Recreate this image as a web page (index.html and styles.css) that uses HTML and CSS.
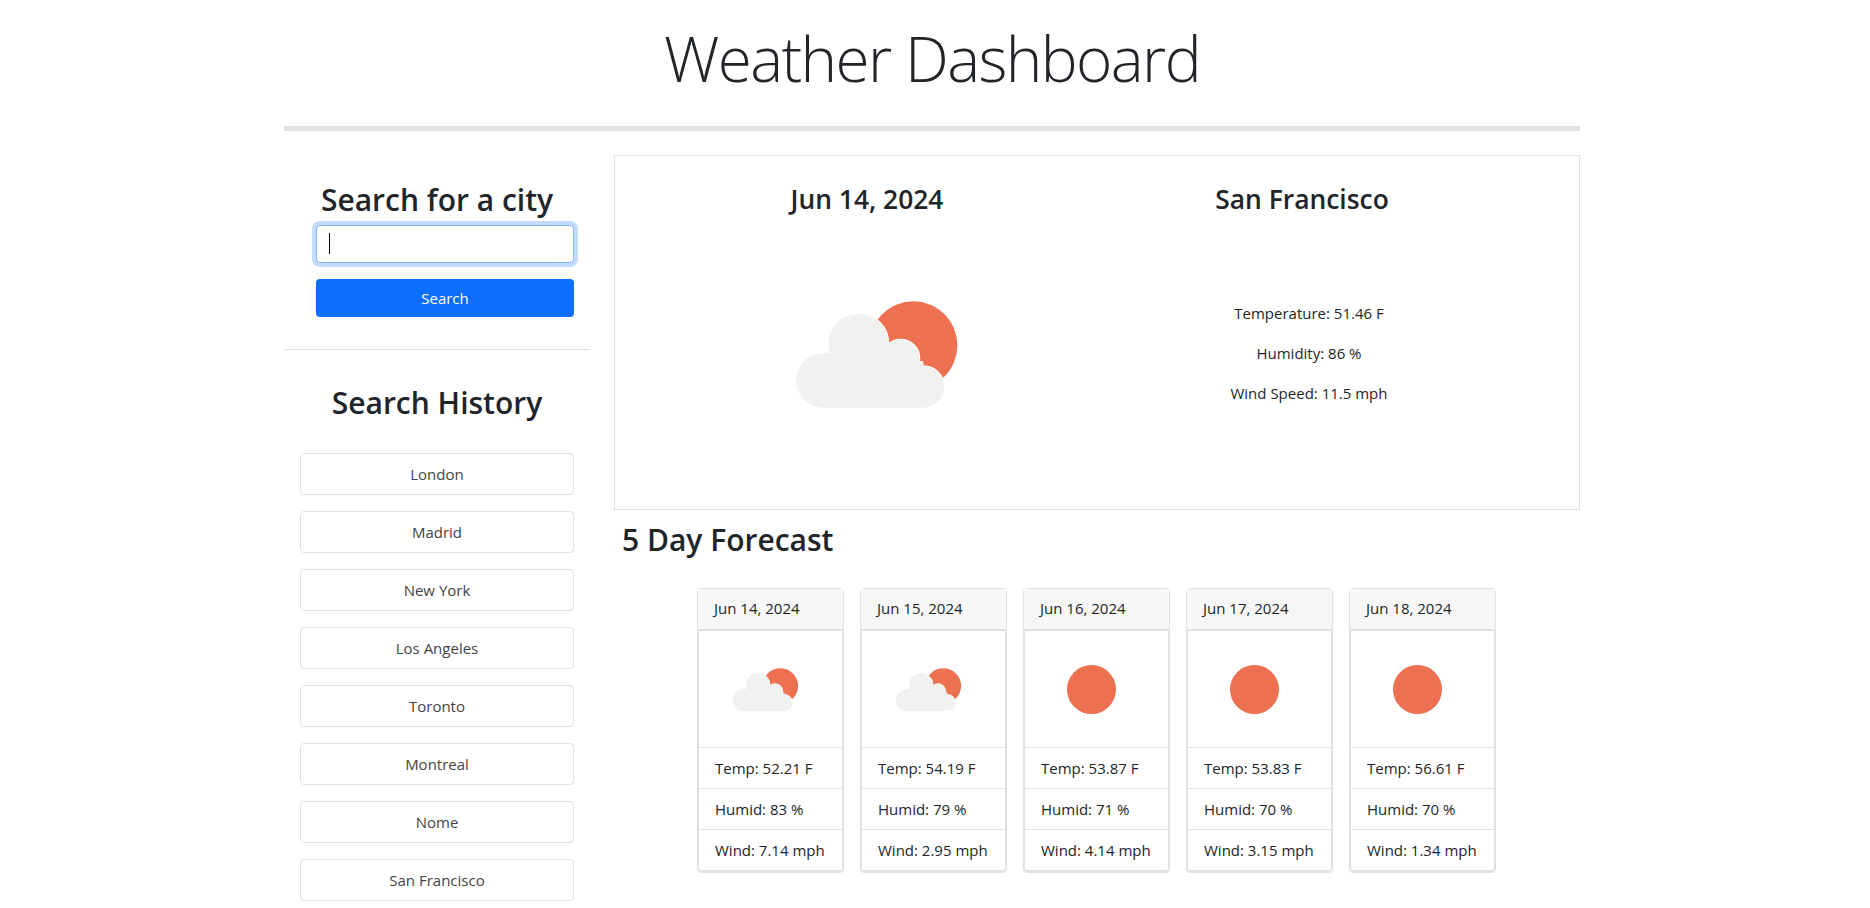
FILE: index.html
```html
<!DOCTYPE html>
<html lang="en">
<head>
  <meta charset="UTF-8" />
  <title>Weather Dashboard</title>
  <link rel="stylesheet" href="styles.css">
</head>
<body>
  <svg class="defs" aria-hidden="true">
    <symbol id="icon-clouds" viewBox="141 9 600 600">
      <circle cx="580" cy="283" r="132" fill="#ed7050" />
      <g fill="#fff" stroke="#fff" stroke-width="6">
        <circle cx="415" cy="278" r="90" />
        <circle cx="542" cy="322" r="56" />
        <circle cx="610" cy="408" r="62" />
      </g>
      <g fill="#f1f2f0">
        <circle cx="310" cy="388" r="82" />
        <circle cx="415" cy="278" r="90" />
        <circle cx="542" cy="322" r="56" />
        <circle cx="610" cy="408" r="62" />
        <rect x="310" y="330" width="300" height="140" />
      </g>
    </symbol>
    <symbol id="icon-sun" viewBox="0 0 81 81">
      <circle cx="44.5" cy="40.5" r="24.5" fill="#ed7050" />
    </symbol>
  </svg>

  <div class="container">
    <header class="page-title">
      <h1>Weather Dashboard</h1>
    </header>
    <hr class="title-rule">

    <div class="row">
      <aside class="sidebar">
        <form class="search-form">
          <h2>Search for a city</h2>
          <div class="input-wrap">
            <input type="text" class="city-input" aria-label="City">
            <span class="caret"></span>
          </div>
          <button type="button" class="btn-search">Search</button>
        </form>
        <hr class="side-rule">
        <h2 class="history-title">Search History</h2>
        <div class="history">
          <button type="button">London</button>
          <button type="button">Madrid</button>
          <button type="button">New York</button>
          <button type="button">Los Angeles</button>
          <button type="button">Toronto</button>
          <button type="button">Montreal</button>
          <button type="button">Nome</button>
          <button type="button">San Francisco</button>
        </div>
      </aside>

      <main class="content">
        <section class="current">
          <div class="current-left">
            <h3>Jun 14, 2024</h3>
            <svg class="current-icon"><use href="#icon-clouds" /></svg>
          </div>
          <div class="current-right">
            <h3>San Francisco</h3>
            <div class="current-stats">
              <p>Temperature: 51.46 F</p>
              <p>Humidity: 86 %</p>
              <p>Wind Speed: 11.5 mph</p>
            </div>
          </div>
        </section>

        <h2 class="forecast-title">5 Day Forecast</h2>
        <div class="forecast">
          <div class="day">
            <div class="day-date">Jun 14, 2024</div>
            <ul>
              <li class="day-icon"><svg><use href="#icon-clouds" /></svg></li>
              <li>Temp: 52.21 F</li>
              <li>Humid: 83 %</li>
              <li>Wind: 7.14 mph</li>
            </ul>
          </div>
          <div class="day">
            <div class="day-date">Jun 15, 2024</div>
            <ul>
              <li class="day-icon"><svg><use href="#icon-clouds" /></svg></li>
              <li>Temp: 54.19 F</li>
              <li>Humid: 79 %</li>
              <li>Wind: 2.95 mph</li>
            </ul>
          </div>
          <div class="day">
            <div class="day-date">Jun 16, 2024</div>
            <ul>
              <li class="day-icon"><svg><use href="#icon-sun" /></svg></li>
              <li>Temp: 53.87 F</li>
              <li>Humid: 71 %</li>
              <li>Wind: 4.14 mph</li>
            </ul>
          </div>
          <div class="day">
            <div class="day-date">Jun 17, 2024</div>
            <ul>
              <li class="day-icon"><svg><use href="#icon-sun" /></svg></li>
              <li>Temp: 53.83 F</li>
              <li>Humid: 70 %</li>
              <li>Wind: 3.15 mph</li>
            </ul>
          </div>
          <div class="day">
            <div class="day-date">Jun 18, 2024</div>
            <ul>
              <li class="day-icon"><svg><use href="#icon-sun" /></svg></li>
              <li>Temp: 56.61 F</li>
              <li>Humid: 70 %</li>
              <li>Wind: 1.34 mph</li>
            </ul>
          </div>
        </div>
      </main>
    </div>
  </div>
</body>
</html>
```

FILE: styles.css
```css
:root {
  --text: #212529;
  --muted: #444;
  --border: #dee2e6;
  --blue: #0d6efd;
}

* {
  box-sizing: border-box;
}

html, body {
  margin: 0;
  background: #fff;
  color: var(--text);
  font-family: "Open Sans", sans-serif;
  font-size: 15px;
}

.defs {
  display: none;
}

.container {
  width: 1296px;
  margin-left: 284px;
}

.page-title {
  height: 126px;
  padding-top: 20px;
  text-align: center;
}

h1 {
  margin: 0;
  font-size: 62px;
  font-weight: 300;
  line-height: 77px;
  letter-spacing: -1.6px;
}

h2 {
  margin: 0;
  font-size: 30px;
  font-weight: 600;
  line-height: 38px;
}

h3 {
  margin: 0;
  font-size: 26.4px;
  font-weight: 600;
  line-height: 34px;
}

.title-rule {
  height: 5px;
  margin: 0;
  border: 0;
  background: var(--border);
}

.row {
  display: flex;
  gap: 24px;
  margin-top: 24px;
}

/* left column */
.sidebar {
  width: 306px;
  flex: none;
  padding-top: 26px;
}

.search-form {
  padding: 0 16px 0 32px;
}

.search-form h2 {
  margin-left: -32px;
  margin-right: -16px;
  text-align: center;
}

.input-wrap {
  position: relative;
  margin-top: 6px;
}

.city-input {
  display: block;
  width: 100%;
  height: 38px;
  border: 1px solid #86b7fe;
  border-radius: 4px;
  outline: 0;
  box-shadow: 0 0 0 4px rgba(13, 110, 253, .25);
}

.caret {
  position: absolute;
  left: 13px;
  top: 8px;
  width: 1px;
  height: 21px;
  background: #000;
}

.btn-search {
  display: block;
  width: 100%;
  height: 38px;
  margin-top: 16px;
  border: 0;
  border-radius: 4px;
  background: var(--blue);
  color: #fff;
  font: inherit;
}

.side-rule {
  height: 1px;
  margin: 32px 0 0;
  border: 0;
  background: var(--border);
}

.history-title {
  margin-top: 34px;
  text-align: center;
}

.history {
  display: flex;
  flex-direction: column;
  gap: 16px;
  margin-top: 31px;
  padding: 0 16px;
}

.history button {
  height: 42px;
  border: 1px solid var(--border);
  border-radius: 4px;
  background: #fff;
  color: var(--muted);
  font: inherit;
}

/* current weather */
.content {
  width: 966px;
  flex: none;
}

.current {
  display: grid;
  grid-template-columns: 504px 366px;
  height: 355px;
  padding-top: 26px;
  border: 1px solid var(--border);
  text-align: center;
}

.current-icon {
  display: block;
  width: 200px;
  height: 200px;
  margin: 38px auto 0;
}

.current-stats {
  margin-top: 85px;
  padding-left: 14px;
}

.current-stats p {
  margin: 0 0 16px;
  line-height: 24px;
}

.forecast-title {
  margin-top: 11px;
  padding-left: 8px;
}

/* five day cards */
.forecast {
  display: flex;
  justify-content: center;
  gap: 16px;
  margin-top: 29px;
  padding-right: 1px;
}

.day {
  width: 147px;
  border: 1px solid var(--border);
  border-radius: 4px;
}

.day-date {
  height: 41px;
  padding-left: 16px;
  background: #f7f7f7;
  line-height: 39px;
  border-bottom: 1px solid var(--border);
}

.day ul {
  margin: 0;
  padding: 0;
  list-style: none;
  border: 1px solid var(--border);
  border-bottom-width: 2px;
  border-radius: 0 0 4px 4px;
}

.day li {
  height: 41px;
  padding-left: 16px;
  line-height: 40px;
  border-bottom: 1px solid var(--border);
}

.day li:last-child {
  height: 40px;
  border-bottom: 0;
}

.day li.day-icon {
  height: 117px;
  padding: 18px 0 0 22px;
}

.day-icon svg {
  display: block;
  width: 81px;
  height: 81px;
}
```
